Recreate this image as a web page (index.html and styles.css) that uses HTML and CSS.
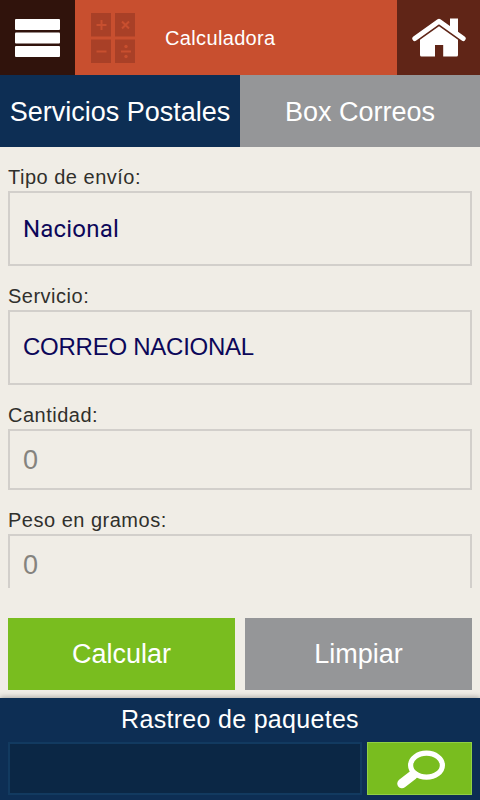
FILE: index.html
```html
<!DOCTYPE html>
<html lang="es">

<head>
  <meta charset="utf-8">
  <title>Calculadora</title>
  <link rel="stylesheet" href="styles.css">
</head>

<body>
  <header class="header">
    <a class="menu-button" href="#">
      <svg width="45" height="38" viewBox="0 0 45 38" fill="#fff">
        <rect width="45" height="11" rx="1" />
        <rect y="13.5" width="45" height="11" rx="1" />
        <rect y="27" width="45" height="11" rx="1" />
      </svg>
    </a>
    <div class="title">
      <svg width="44" height="50" viewBox="0 0 44 50">
        <path class="keys" d="M0 0h20v23.500H0zM24 0h20v23.500H24zM0 26.500h20V50H0zM24 26.500h20V50H24z" />
        <path class="signs" d="M5.500 12h10M10.500 7v10M31 8.500l7 7M38 8.500l-7 7M5.500 38.500h10M30 38.500h10" />
        <circle class="dots" cx="35" cy="33.500" r="1.700" />
        <circle class="dots" cx="35" cy="43.500" r="1.700" />
      </svg>
      <span>Calculadora</span>
    </div>
    <a class="home-button" href="#">
      <svg width="54" height="39" viewBox="0 0 54 39" fill="#fff">
        <path d="M38 .5h8v15l-8-6z" />
        <path d="M2.800 20.500L27 3.200L51.200 20.500" fill="none" stroke="#fff" stroke-width="5" stroke-linejoin="round" stroke-linecap="round" />
        <path d="M27 8.200L46 21.800V37Q46 38.500 44.500 38.500H31.200V27H23V38.500H9.500Q8 38.500 8 37V21.800Z" />
      </svg>
    </a>
  </header>

  <nav class="tabs">
    <a class="tab active" href="#">Servicios Postales</a>
    <a class="tab" href="#">Box Correos</a>
  </nav>

  <main class="form">
    <div class="field">
      <label>Tipo de envío:</label>
      <div class="select type">Nacional</div>
    </div>
    <div class="field">
      <label>Servicio:</label>
      <div class="select">CORREO NACIONAL</div>
    </div>
    <div class="field">
      <label>Cantidad:</label>
      <div class="input">0</div>
    </div>
    <div class="field">
      <label>Peso en gramos:</label>
      <div class="input">0</div>
    </div>
  </main>

  <div class="actions">
    <button class="calculate">Calcular</button>
    <button class="clear">Limpiar</button>
  </div>

  <footer class="tracking">
    <div class="tracking-title">Rastreo de paquetes</div>
    <div class="tracking-row">
      <input type="text" class="tracking-input">
      <button class="search">
        <svg width="50" height="40" viewBox="0 0 50 40" fill="none" stroke="#fff">
          <ellipse cx="30.500" cy="16.200" rx="15.900" ry="12" stroke-width="5.200" />
          <path d="M17 26L6 34.500" stroke-width="9.500" stroke-linecap="round" />
        </svg>
      </button>
    </div>
  </footer>
</body>

</html>
```
FILE: styles.css
```css
* {
  box-sizing: border-box;
}

body {
  margin: 0;
  height: 800px;
  display: flex;
  flex-direction: column;
  overflow: hidden;
  background: #f0ede6;
  color: #30302c;
  font-family: "Liberation Sans", Arial, sans-serif;
}

a {
  color: #fff;
  text-decoration: none;
}

svg {
  display: block;
}

button {
  border: none;
  border-radius: 0;
  padding: 0;
  color: #fff;
  font-family: inherit;
  font-size: 27px;
}

/* Header */
.header {
  display: flex;
  height: 75px;
  background: #c84f2f;
}

.menu-button {
  width: 75px;
  padding: 19px 15px;
  background: #30130c;
}

.title {
  flex: 1;
  display: flex;
  align-items: center;
  gap: 30px;
  padding-left: 16px;
  color: #fff;
  font-size: 20px;
  letter-spacing: 0.35px;
}

.title span {
  padding-top: 2px;
}

.keys {
  fill: #a94027;
}

.signs {
  stroke: #c84f2f;
  stroke-width: 2;
}

.dots {
  fill: #c84f2f;
}

.home-button {
  width: 83px;
  padding: 18px 15px;
  background: #602517;
}

/* Tabs */
.tabs {
  display: flex;
  height: 72px;
}

.tab {
  flex: 1;
  background: #959698;
  font-size: 27px;
  line-height: 74px;
  text-align: center;
}

.tab.active {
  background: #0d2e54;
}

/* Form, the last field is cut by the scroll area */
.form {
  height: 441px;
  padding: 18px 8px 0;
  overflow: hidden;
}

.field {
  margin-bottom: 18px;
}

label {
  display: block;
  height: 26px;
  font-size: 20px;
  line-height: 24px;
  letter-spacing: 0.5px;
}

.select,
.input {
  border: 2px solid #d2cfcb;
  padding-left: 13px;
}

.select {
  height: 75px;
  color: #0c0759;
  font-size: 24px;
  line-height: 70px;
  letter-spacing: -0.25px;
}

.select.type {
  font-family: Roboto, sans-serif;
  line-height: 73px;
  letter-spacing: 0.2px;
}

.input {
  height: 61px;
  color: #85837e;
  font-size: 27px;
  line-height: 58px;
}

/* Buttons */
.actions {
  display: flex;
  gap: 10px;
  padding: 30px 8px 8px;
}

.actions button {
  flex: 1;
  height: 72px;
  line-height: 73px;
}

.calculate,
.search {
  background: #79bd1f;
}

.clear {
  background: #959698;
}

/* Package tracking */
.tracking {
  height: 102px;
  padding: 0 8px;
  background: #0d2e54;
  box-shadow: 0 -1px 5px rgba(0, 0, 0, 0.3);
}

.tracking-title {
  height: 44px;
  color: #fff;
  font-size: 25px;
  line-height: 42px;
  letter-spacing: 0.3px;
  text-align: center;
}

.tracking-row {
  display: flex;
  gap: 5px;
}

.tracking-input {
  flex: 1;
  min-width: 0;
  height: 53px;
  border: 2px solid #123a60;
  background: #0b2745;
}

.tracking .search {
  width: 105px;
  height: 53px;
  padding: 5px 25px 5px 28px;
  border: 1px solid #91d044;
}
```
